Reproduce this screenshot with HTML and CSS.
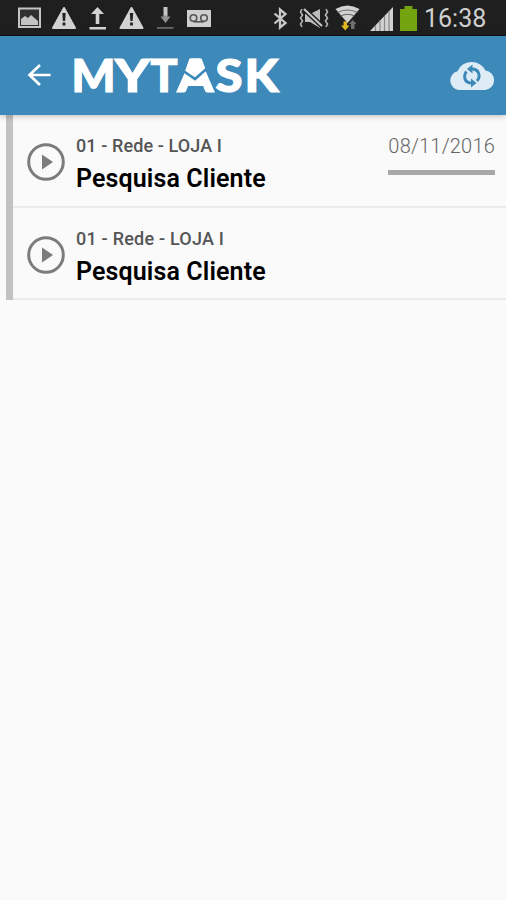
FILE: index.html
```html
<!DOCTYPE html>
<html lang="pt-BR">

<head>
    <meta charset="UTF-8">
    <meta name="viewport" content="width=device-width, initial-scale=1.0">
    <title>MyTask</title>
    <link rel="stylesheet" href="styles.css">
</head>

<body>
    <div class="status-bar">
        <svg class="notifications" width="220" height="36" viewBox="0 0 220 36">
            <!-- gallery -->
            <rect x="19" y="8.5" width="21" height="18.5" fill="#303030" stroke="#c4c4c4" stroke-width="2" />
            <path d="M21 25v-6l4-3 3 2 3-3 7 6v4z" fill="#c4c4c4" />
            <!-- warning -->
            <path d="M64 8L75 28H53z" fill="#d2d2d2" stroke="#d2d2d2" stroke-width="2" stroke-linejoin="round" />
            <path d="M62.3 13h3.4l-.6 8h-2.2zM62.6 22.5h2.8v3h-2.8z" fill="#222" />
            <!-- upload -->
            <path d="M97.500 7l6.500 7h-4.700v10h-3.600v-10h-4.700zM89.500 27h16.500v2.500h-16.500z" fill="#d2d2d2" />
            <!-- warning -->
            <path d="M131.500 8L142.500 28H120.500z" fill="#d2d2d2" stroke="#d2d2d2" stroke-width="2" stroke-linejoin="round" />
            <path d="M129.800 13h3.4l-.6 8h-2.2zM130.100 22.500h2.800v3h-2.800z" fill="#222" />
            <!-- download -->
            <path d="M163.500 7h4v9h-4z" fill="#c4c4c4" />
            <path d="M163.500 15.500h4v1h3l-5 6.500-5-6.500h3z" fill="#929292" />
            <path d="M157 27h16.500v1.800h-16.500z" fill="#666" />
            <!-- voicemail -->
            <rect x="187" y="10" width="24" height="17" fill="#cecece" />
            <g fill="none" stroke="#555" stroke-width="1.600">
                <circle cx="193.500" cy="18" r="3.300" />
                <circle cx="204" cy="18" r="3.300" />
                <path d="M193.500 21.800h10.500" />
            </g>
        </svg>
        <svg class="system" width="150" height="36" viewBox="270 0 150 36">
            <!-- bluetooth -->
            <path d="M274.500 13.500l11 9.500-5.500 4.500v-18l5.500 4.500-11 9.500" fill="none" stroke="#c8c8c8" stroke-width="2.300" />
            <!-- vibrate / muted -->
            <path d="M305 14h5l10-5v19l-10-6h-5z" fill="#bdbdbd" />
            <path d="M304 9l18 17" stroke="#1f1f1f" stroke-width="5" />
            <path d="M304 9l18 17" stroke="#c4c4c4" stroke-width="2.200" />
            <path d="M302 9l-1.500 3 2 3-2 3 2 3-2 3 1.500 3M326 9l1.500 3-2 3 2 3-2 3 2 3-1.500 3" fill="none" stroke="#b4b4b4" stroke-width="1.600" />
            <!-- wifi -->
            <path d="M335.500 9q12-7 24 0l-12 14z" fill="#d2d2d2" />
            <path d="M337.500 12.500q10-5 20 0M340.500 16q7-3.500 14 0" fill="none" stroke="#666" stroke-width="1.100" />
            <path d="M343.500 21.500h3.500v4h2.500l-4.200 5-4.300-5h2.500z" fill="#e2b820" />
            <path d="M351 29v-5h-2l3.700-4 3.800 4h-2v5z" fill="#707070" />
            <!-- signal -->
            <path d="M370 31L393 7v24z" fill="#d2d2d2" />
            <path d="M375.500 25v6M380 20v11M384.500 16v15M389 11v20" stroke="#888" stroke-width="1.200" />
            <!-- battery -->
            <path d="M400 9h4.500v-3h8v3h4.500v22h-17z" fill="#73a30e" />
        </svg>
        <span class="clock">16:38</span>
    </div>

    <header class="app-bar">
        <svg class="back" width="24" height="24" viewBox="0 0 24 24">
            <path d="M23.500 12H3M13 2L2.500 12 13 22" />
        </svg>
        <svg class="logo" width="216" height="64" viewBox="-4 -12 216 64">
            <g class="logo-text">
                <text x="-1.500" y="37.500" textLength="44" lengthAdjust="spacingAndGlyphs">M</text>
                <text x="42" y="37.500" textLength="35" lengthAdjust="spacingAndGlyphs">Y</text>
                <text x="77.500" y="37.500" textLength="27" lengthAdjust="spacingAndGlyphs">T</text>
                <text x="104.500" y="37.500" textLength="36" lengthAdjust="spacingAndGlyphs">A</text>
                <text x="142.500" y="37.500" textLength="27" lengthAdjust="spacingAndGlyphs">S</text>
                <text x="171.500" y="37.500" textLength="34" lengthAdjust="spacingAndGlyphs">K</text>
            </g>
            <!-- check cut through the A -->
            <path d="M112 19l10 7 11-8 5 14h-31z" fill="#fff" />
            <path d="M115.500 32h14.500l2.500 6.500h-19.500z" fill="#3d89b9" />
            <path d="M116.500 4.500h12l4.500 11.500-10.500 8-10.500-7z" fill="#fff" />
            <path class="logo-check" d="M109 16l13 9 12.500-11" />
        </svg>
        <svg class="sync" width="46" height="32" viewBox="0 0 46 32">
            <path d="M10 31A9.500 9.500 0 0 1 8.500 12.300A15 14 0 0 1 36.500 11.500A9.800 9.800 0 0 1 36 31z" fill="#deecf6" />
            <path d="M17.500 22.500a7.500 7.500 0 0 1 0-10M28 11.500a7.500 7.500 0 0 1 0 10.500" fill="none" stroke="#3d89b9" stroke-width="3" />
            <path d="M23.500 5.500v3q4 0 6.500 3l-2.500 2q-1.500-2-4-2v3l-5.500-4.500zM22 19.500v3q-2.500 0-4-2l-2.500 2q2.500 3 6.500 3v3l5.500-4.500z" fill="#3d89b9" />
        </svg>
    </header>

    <main class="task-list">
        <div class="task">
            <svg class="play" width="38" height="38" viewBox="0 0 38 38">
                <circle cx="19" cy="19" r="17.300" />
                <path d="M15 11.500v15l11-7.500z" />
            </svg>
            <div class="info">
                <div class="store">01 - Rede - LOJA I</div>
                <div class="name">Pesquisa Cliente</div>
            </div>
            <div class="date">08/11/2016</div>
        </div>
        <div class="task">
            <svg class="play" width="38" height="38" viewBox="0 0 38 38">
                <circle cx="19" cy="19" r="17.300" />
                <path d="M15 11.500v15l11-7.500z" />
            </svg>
            <div class="info">
                <div class="store wide">01 - Rede - LOJA I</div>
                <div class="name">Pesquisa Cliente</div>
            </div>
        </div>
    </main>
</body>

</html>
```

FILE: styles.css
```css
* {
    box-sizing: border-box;
}

body {
    margin: 0;
    height: 900px;
    overflow: hidden;
    background: #fafafa;
    font-family: Roboto, sans-serif;
}

svg {
    display: block;
    flex: none;
}

.status-bar {
    display: flex;
    height: 36px;
    background: #1f1f1f;
    border-bottom: 1px solid #111;
}

.system {
    margin-left: 50px;
}

.clock {
    margin-left: 4px;
    color: #d0d0d0;
    font-size: 25px;
    line-height: 37px;
}

.app-bar {
    display: flex;
    align-items: flex-start;
    position: relative;
    height: 79px;
    background: #3d89b9;
    box-shadow: 0 1px 6px rgba(0, 0, 0, 0.25);
}

.back {
    margin: 27px 0 0 27px;
    fill: none;
    stroke: #fff;
    stroke-width: 2.7;
}

.logo {
    margin: 6px 0 0 18px;
}

.logo-text {
    fill: #fff;
    stroke: #fff;
    stroke-width: 1.2;
    font-family: Lato, sans-serif;
    font-size: 45px;
    font-weight: 900;
}

.logo-check {
    fill: none;
    stroke: #3d89b9;
    stroke-width: 2.6;
}

.sync {
    margin: 23px 11px 0 auto;
}

.task-list {
    margin-left: 6px;
    border-left: 7px solid #c2c2c2;
}

.task {
    display: flex;
    height: 93px;
    padding-right: 11px;
    border-bottom: 2px solid #ebebeb;
}

.task + .task {
    height: 92px;
}

.play {
    margin: 28px 0 0 14px;
}

.play circle {
    fill: none;
    stroke: #7c7c7c;
    stroke-width: 3;
}

.play path {
    fill: #7c7c7c;
}

.info {
    margin: 20px 0 0 11px;
    white-space: nowrap;
}

.store {
    color: #555;
    font-size: 18px;
    font-weight: 500;
    line-height: 22px;
    letter-spacing: 0.1px;
}

.store.wide {
    letter-spacing: 0.22px;
}

.name {
    margin-top: 6px;
    color: #000;
    font-size: 25px;
    font-weight: 600;
    line-height: 32px;
    letter-spacing: 0.12px;
}

.date {
    margin: 18px 0 0 auto;
    height: 42px;
    border-bottom: 5px solid #a8a8a8;
    color: #666;
    font-size: 20px;
    font-weight: 300;
    line-height: 26px;
    letter-spacing: 0.2px;
}
```
